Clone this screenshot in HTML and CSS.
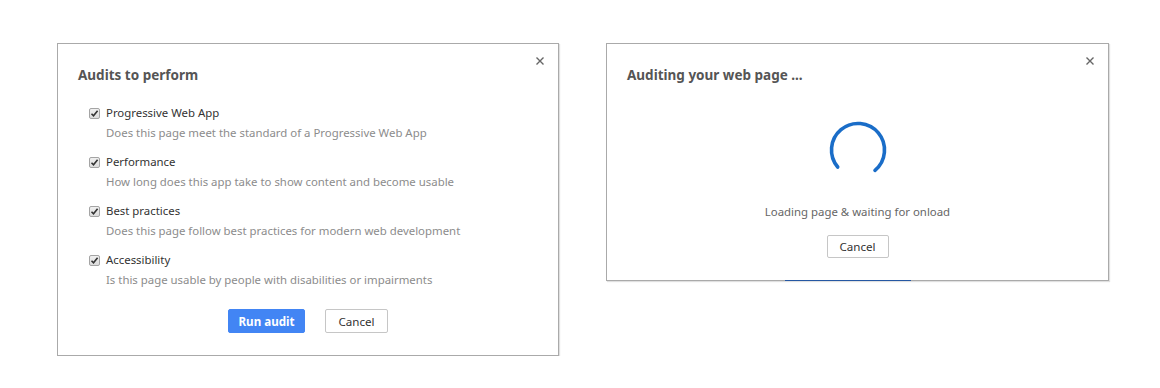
FILE: index.html
```html
<!DOCTYPE html>
<html lang="en">
<head>
  <meta charset="UTF-8">
  <title>Audits</title>
  <link rel="stylesheet" href="styles.css">
</head>
<body>
  <div class="stage">

    <div class="dialog audits">
      <span class="close"><svg width="8" height="8" viewBox="0 0 8 8"><path d="M0.5 0.5L7.5 7.5M7.5 0.5L0.5 7.5" stroke="#666" stroke-width="1.4"/></svg></span>
      <h2>Audits to perform</h2>
      <ul class="list">
        <li>
          <div class="row"><span class="check"><svg width="11" height="11" viewBox="0 0 11 11"><path d="M2.5 5.8L4.5 7.8L8.6 2.8" fill="none" stroke="#333" stroke-width="1.6"/></svg></span>Progressive Web App</div>
          <div class="desc">Does this page meet the standard of a Progressive Web App</div>
        </li>
        <li>
          <div class="row"><span class="check"><svg width="11" height="11" viewBox="0 0 11 11"><path d="M2.5 5.8L4.5 7.8L8.6 2.8" fill="none" stroke="#333" stroke-width="1.6"/></svg></span>Performance</div>
          <div class="desc">How long does this app take to show content and become usable</div>
        </li>
        <li>
          <div class="row"><span class="check"><svg width="11" height="11" viewBox="0 0 11 11"><path d="M2.5 5.8L4.5 7.8L8.6 2.8" fill="none" stroke="#333" stroke-width="1.6"/></svg></span>Best practices</div>
          <div class="desc">Does this page follow best practices for modern web development</div>
        </li>
        <li>
          <div class="row"><span class="check"><svg width="11" height="11" viewBox="0 0 11 11"><path d="M2.5 5.8L4.5 7.8L8.6 2.8" fill="none" stroke="#333" stroke-width="1.6"/></svg></span>Accessibility</div>
          <div class="desc">Is this page usable by people with disabilities or impairments</div>
        </li>
      </ul>
      <div class="buttons">
        <button class="btn primary">Run audit</button>
        <button class="btn">Cancel</button>
      </div>
    </div>

    <div class="dialog progress">
      <span class="close"><svg width="8" height="8" viewBox="0 0 8 8"><path d="M0.5 0.5L7.5 7.5M7.5 0.5L0.5 7.5" stroke="#666" stroke-width="1.4"/></svg></span>
      <h2>Auditing your web page ...</h2>
      <div class="spinner">
        <svg width="60" height="60" viewBox="0 0 60 60">
          <path d="M9.7 47A26.5 26.5 0 1 1 47 50.3" fill="none" stroke="#1a6dc8" stroke-width="3.6" stroke-linecap="round"/>
        </svg>
      </div>
      <p class="status">Loading page &amp; waiting for onload</p>
      <div class="buttons">
        <button class="btn small">Cancel</button>
      </div>
      <span class="under"></span>
    </div>

  </div>
</body>
</html>
```

FILE: styles.css
```css
body {
  margin: 0;
  background: #fff;
  font-family: "Noto Sans", "Open Sans", sans-serif;
  color: #333;
}

.stage {
  display: flex;
  align-items: flex-start;
  gap: 47px;
  padding: 43px 0 0 57px;
}

.dialog {
  position: relative;
  box-sizing: border-box;
  width: 502px;
  background: #fff;
  border: 1px solid #aaa;
  box-shadow: 1px 1px 1px rgba(0, 0, 0, 0.12);
  padding: 23px 20px 22px 20px;
}

.dialog.progress {
  width: 503px;
  padding-bottom: 22px;
}

.dialog h2 {
  margin: 0;
  font-size: 13.5px;
  line-height: 16px;
  font-weight: bold;
  color: #555;
}

.close {
  position: absolute;
  top: 13px;
  right: 14px;
  display: flex;
}

.list {
  list-style: none;
  margin: 20px 0 0 0;
  padding: 0 0 0 11px;
}

.list li {
  margin-bottom: 9px;
}

.row {
  display: flex;
  align-items: center;
  font-size: 11.4px;
  line-height: 20px;
  color: #333;
}

.check {
  display: flex;
  width: 11px;
  height: 11px;
  box-sizing: border-box;
  border: 1px solid #a4a4a4;
  border-radius: 2px;
  background: linear-gradient(#f0f0f0, #dcdcdc);
  margin-right: 6px;
}

.check svg {
  margin: -1px;
}

.desc {
  padding-left: 17px;
  font-size: 11.4px;
  line-height: 20px;
  color: #8c8c8c;
}

.buttons {
  display: flex;
  justify-content: center;
  gap: 20px;
  margin-top: 19px;
}

.btn {
  height: 24px;
  width: 63px;
  padding: 0;
  white-space: nowrap;
  font-family: inherit;
  font-size: 11.6px;
  color: #333;
  background: #fff;
  border: 1px solid #c6c6c6;
  border-radius: 2px;
}

.btn.primary {
  width: 77px;
  background: #4285f4;
  border-color: #4285f4;
  color: #fff;
  font-weight: bold;
}

.spinner {
  display: flex;
  justify-content: center;
  margin-top: 37px;
}

.status {
  margin: 22px 0 0 0;
  text-align: center;
  font-size: 11.4px;
  line-height: 20px;
  color: #666;
}

.progress .buttons {
  margin-top: 13px;
}

.btn.small {
  height: 23px;
  width: 62px;
}

.under {
  position: absolute;
  left: 178px;
  bottom: -1px;
  width: 126px;
  height: 1px;
  background: #2557a3;
}
```
